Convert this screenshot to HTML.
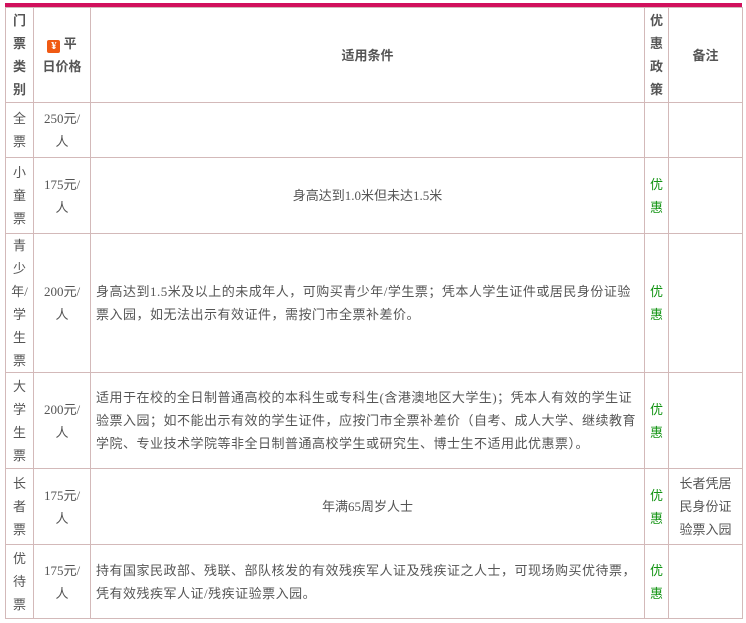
<!DOCTYPE html>
<html><head><meta charset="utf-8"><style>
body{margin:0;background:#fff;font-family:"Liberation Serif","Noto Sans CJK SC",serif;color:#555;font-size:13px;}
.bar{position:absolute;left:5px;top:3px;width:737px;height:4px;background:#d1105c;}
table{position:absolute;left:5px;top:7px;border-collapse:collapse;table-layout:fixed;width:737px;}
td{border:1px solid #d3b9b9;padding:0;line-height:23px;text-align:center;vertical-align:middle;word-break:break-all;}
td.l{text-align:left;padding:0 0 0 5px;white-space:nowrap;overflow:hidden;letter-spacing:0.5px;}
th{border:1px solid #d3b9b9;padding:0;line-height:23px;font-weight:bold;color:#555;font-size:13px;}
.g{color:#139413;}
.y{display:inline-block;width:13px;height:13px;background:#f05a14;color:#fff;border-radius:2px;font-size:11px;line-height:13px;vertical-align:-1px;}
</style></head><body>
<div class="bar"></div>
<table>
<colgroup><col style="width:28px"><col style="width:57px"><col style="width:554px"><col style="width:24px"><col style="width:74px"></colgroup>
<tr style="height:95px"><th>门<br>票<br>类<br>别</th><th><span class="y">¥</span> 平<br>日价格</th><th>适用条件</th><th>优<br>惠<br>政<br>策</th><th>备注</th></tr>
<tr style="height:55px"><td>全<br>票</td><td>250元/<br>人</td><td></td><td></td><td></td></tr>
<tr style="height:76px"><td>小<br>童<br>票</td><td>175元/<br>人</td><td>身高达到1.0米但未达1.5米</td><td class="g">优<br>惠</td><td></td></tr>
<tr style="height:136px"><td>青<br>少<br>年/<br>学<br>生<br>票</td><td>200元/<br>人</td><td class="l">身高达到1.5米及以上的未成年人，可购买青少年/学生票；凭本人学生证件或居民身份证验<br>票入园，如无法出示有效证件，需按门市全票补差价。</td><td class="g">优<br>惠</td><td></td></tr>
<tr style="height:96px"><td>大<br>学<br>生<br>票</td><td>200元/<br>人</td><td class="l">适用于在校的全日制普通高校的本科生或专科生(含港澳地区大学生)；凭本人有效的学生证<br>验票入园；如不能出示有效的学生证件，应按门市全票补差价（自考、成人大学、继续教育<br>学院、专业技术学院等非全日制普通高校学生或研究生、博士生不适用此优惠票）。</td><td class="g">优<br>惠</td><td></td></tr>
<tr style="height:76px"><td>长<br>者<br>票</td><td>175元/<br>人</td><td>年满65周岁人士</td><td class="g">优<br>惠</td><td>长者凭居<br>民身份证<br>验票入园</td></tr>
<tr style="height:74px"><td>优<br>待<br>票</td><td>175元/<br>人</td><td class="l">持有国家民政部、残联、部队核发的有效残疾军人证及残疾证之人士，可现场购买优待票，<br>凭有效残疾军人证/残疾证验票入园。</td><td class="g">优<br>惠</td><td></td></tr>
</table>
</body></html>
